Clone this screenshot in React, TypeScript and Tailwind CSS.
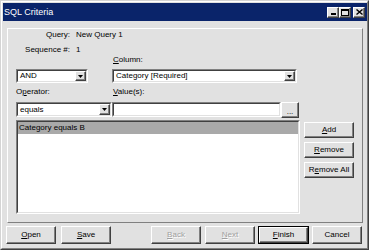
import React from "react";

const BG = "bg-[#e1e1e1]";

function Raised({
  children,
  className = "",
}: {
  children?: React.ReactNode;
  className?: string;
}) {
  return (
    <div
      className={`flex items-center justify-center border border-t-white border-l-white border-r-[#404040] border-b-[#404040] shadow-[inset_-1px_-1px_0_#808080] ${BG} ${className}`}
    >
      {children}
    </div>
  );
}

function Btn({
  children,
  disabled,
  def,
  className = "",
}: {
  children: React.ReactNode;
  disabled?: boolean;
  def?: boolean;
  className?: string;
}) {
  const inner = (
    <Raised className={`h-full w-full ${disabled ? "text-[#a0a0a0] [text-shadow:1px_1px_0_#ffffff]" : "text-black"}`}>
      <span className="leading-[10px]">{children}</span>
    </Raised>
  );
  if (def) {
    return <div className={`border border-black ${className}`}>{inner}</div>;
  }
  return <div className={className}>{inner}</div>;
}

function Arrow() {
  return (
    <svg width="5" height="3" viewBox="0 0 5 3">
      <polygon points="0,0 5,0 2.5,3" fill="#000" />
    </svg>
  );
}

function Sunken({
  children,
  className = "",
}: {
  children?: React.ReactNode;
  className?: string;
}) {
  return (
    <div
      className={`border border-t-[#808080] border-l-[#808080] border-r-white border-b-white bg-white ${className}`}
    >
      <div className="h-full w-full border border-t-[#404040] border-l-[#404040] border-r-[#e1e1e1] border-b-[#e1e1e1] flex items-stretch">
        {children}
      </div>
    </div>
  );
}

function Combo({ text, className = "" }: { text: string; className?: string }) {
  return (
    <Sunken className={className}>
      <div className="flex-1 pl-[2px] flex items-center leading-[10px] overflow-hidden whitespace-nowrap">
        {text}
      </div>
      <Raised className="w-[11px]">
        <Arrow />
      </Raised>
    </Sunken>
  );
}

export default function App() {
  return (
    <div className="w-[369px] h-[250px] font-['Liberation_Sans',Arial,sans-serif] text-[8px] text-black">
      <div className="h-full w-full border-t border-l border-t-[#d4d4d4] border-l-[#d4d4d4] border-r border-b border-r-[#404040] border-b-[#404040]">
        <div className={`h-full w-full border-t border-l border-t-white border-l-white border-r border-b border-r-[#808080] border-b-[#808080] ${BG} pt-[1px] pl-[1px] flex flex-col`}>
          {/* Title bar */}
          <div className="h-[18px] bg-[#0a246a] flex items-center justify-between">
            <span className="text-white text-[9px] pl-[1px] leading-[10px]">SQL Criteria</span>
            <div className="flex items-center mr-[2px]">
              <Raised className="w-[12px] h-[11px] items-end pb-[2px]">
                <div className="w-[5px] h-[2px] bg-black" />
              </Raised>
              <Raised className="w-[12px] h-[11px]">
                <div className="w-[8px] h-[7px] border border-black border-t-2" />
              </Raised>
              <Raised className="w-[12px] h-[11px] ml-[2px]">
                <svg width="7" height="6" viewBox="0 0 7 6">
                  <path d="M0.5 0.5 L6.5 5.5 M6.5 0.5 L0.5 5.5" stroke="#000" strokeWidth="1.4" />
                </svg>
              </Raised>
            </div>
          </div>

          {/* Panel */}
          <div className="mt-[7px] ml-[4px] w-[356px] h-[195px] border border-t-white border-l-white border-r-[#808080] border-b-[#808080]">
            <div className="mt-[1px] flex h-[10px] leading-[10px]">
              <div className="w-[62px] text-right">Query:</div>
              <div className="ml-[6px]">New Query 1</div>
            </div>
            <div className="mt-[5px] flex h-[10px] leading-[10px]">
              <div className="w-[62px] text-right">Sequence #:</div>
              <div className="ml-[6px]">1</div>
            </div>

            <div className="pl-[8px]">
              {/* Row 1 */}
              <div className="flex">
                <div className="w-[96px] pt-[14px]">
                  <Combo text="AND" className="w-[72px] h-[14px]" />
                </div>
                <div className="flex flex-col">
                  <div className="h-[10px] leading-[10px] pl-[1px]">
                    <span className="underline">C</span>olumn:
                  </div>
                  <Combo text="Category [Required]" className="mt-[4px] w-[185px] h-[14px]" />
                </div>
              </div>

              {/* Row 2 */}
              <div className="flex mt-[4px]">
                <div className="w-[96px] flex flex-col">
                  <div className="h-[10px] leading-[10px]">
                    O<span className="underline">p</span>erator:
                  </div>
                  <Combo text="equals" className="mt-[5px] w-[96px] h-[15px]" />
                </div>
                <div className="flex flex-col">
                  <div className="h-[10px] leading-[10px] pl-[1px]">
                    <span className="underline">V</span>alue(s):
                  </div>
                  <div className="mt-[5px] flex">
                    <Sunken className="w-[169px] h-[15px]" />
                    <Raised className="w-[18px] h-[16px] items-end pb-[3px]">
                      <span className="leading-[4px] text-[8px]">...</span>
                    </Raised>
                  </div>
                </div>
              </div>

              {/* List + buttons */}
              <div className="flex mt-[2px]">
                <Sunken className="w-[284px] h-[94px]">
                  <div className="flex-1 flex flex-col">
                    <div className="h-[12px] bg-[#a9a9a9] leading-[12px] pl-[1px]">Category equals B</div>
                  </div>
                </Sunken>
                <div className="ml-[4px] mt-[2px] flex flex-col gap-[4px]">
                  <Btn className="w-[50px] h-[16px]">
                    <span className="underline">A</span>dd
                  </Btn>
                  <Btn className="w-[50px] h-[16px]">
                    <span className="underline">R</span>emove
                  </Btn>
                  <Btn className="w-[50px] h-[16px]">
                    R<span className="underline">e</span>move All
                  </Btn>
                </div>
              </div>
            </div>
          </div>

          {/* Bottom buttons */}
          <div className="mt-[3px] flex">
            <Btn className="ml-[3px] w-[50px] h-[18px]">
              <span className="underline">O</span>pen
            </Btn>
            <Btn className="ml-[5px] w-[50px] h-[18px]">
              <span className="underline">S</span>ave
            </Btn>
            <Btn disabled className="ml-[40px] w-[50px] h-[18px]">
              <span className="underline">B</span>ack
            </Btn>
            <Btn disabled className="ml-[4px] w-[50px] h-[18px]">
              <span className="underline">N</span>ext
            </Btn>
            <Btn def className="ml-[3px] w-[51px] h-[18px]">
              <span className="underline">F</span>inish
            </Btn>
            <Btn className="ml-[3px] w-[50px] h-[18px]">Cancel</Btn>
          </div>
        </div>
      </div>
    </div>
  );
}
